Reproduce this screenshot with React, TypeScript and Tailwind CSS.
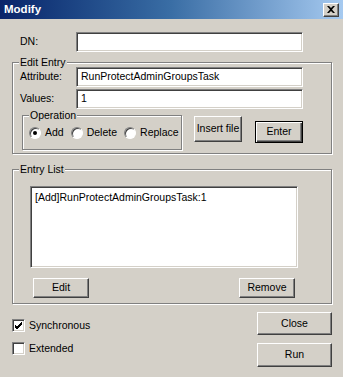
import React from "react";

const font = "font-['Liberation_Sans',Arial,sans-serif]";

const sunken =
  "bg-white border border-t-[#808080] border-l-[#808080] border-b-white border-r-white shadow-[inset_1px_1px_0_#404040,inset_-1px_-1px_0_#d4d0c8]";

const raised =
  "bg-[#d4d0c8] border border-t-white border-l-white border-b-[#404040] border-r-[#404040] shadow-[inset_-1px_-1px_0_#808080] flex items-center justify-center text-[10.5px] text-black";

const etched = "border border-[#808080] shadow-[inset_1px_1px_0_#fff,1px_1px_0_#fff]";

const Legend = ({ children }: { children: React.ReactNode }) => (
  <div className="-mt-[7px] -mb-[2px] ml-[6px] w-fit bg-[#d4d0c8] px-[1px] text-[10.5px] leading-[13px] text-black">
    {children}
  </div>
);

const TextBox = ({ value, className }: { value?: string; className: string }) => (
  <div className={`${sunken} ${className} flex items-center pl-[4px] text-[10.5px] text-black`}>{value}</div>
);

const Radio = ({ checked, label, className }: { checked?: boolean; label: string; className?: string }) => (
  <div className={`flex items-center ${className ?? ""}`}>
    <div className="w-[12px] h-[12px] rounded-full bg-white border border-t-[#808080] border-l-[#808080] border-b-white border-r-white shadow-[inset_1px_1px_0_#404040] flex items-center justify-center">
      {checked && <div className="w-[4px] h-[4px] rounded-full bg-black" />}
    </div>
    <span className="ml-[4px] text-[10.5px] text-black">{label}</span>
  </div>
);

const CheckBox = ({ checked, label }: { checked?: boolean; label: string }) => (
  <div className="flex items-center h-[13px]">
    <div className={`${sunken} w-[13px] h-[13px] flex items-center justify-center`}>
      {checked && (
        <svg width="9" height="9" viewBox="0 0 9 9">
          <path d="M1 4 L3 6 L8 1 M1 5 L3 7 L8 2 M1 6 L3 8 L8 3" stroke="#000" strokeWidth="1" fill="none" />
        </svg>
      )}
    </div>
    <span className="ml-[4px] text-[10.5px] text-black">{label}</span>
  </div>
);

export default function App() {
  return (
    <div className={`w-[343px] h-[377px] bg-[#d4d0c8] flex flex-col overflow-hidden ${font}`}>
      {/* Title bar */}
      <div className="h-[19px] flex items-center bg-gradient-to-r from-[#0a246a] via-[#3a6ea5] to-[#a6caf0] pl-[4px] pr-[4px]">
        <span className="text-white font-bold text-[11.5px]">Modify</span>
        <div className={`${raised} ml-auto w-[16px] h-[14px]`}>
          <svg width="8" height="7" viewBox="0 0 8 7">
            <path d="M0 0 L2 0 L4 2 L6 0 L8 0 L5 3.5 L8 7 L6 7 L4 5 L2 7 L0 7 L3 3.5 Z" fill="#000" />
          </svg>
        </div>
      </div>

      <div className="flex flex-col pl-[12px] pr-[11px]">
        {/* DN */}
        <div className="flex items-center mt-[13px]">
          <span className="w-[64px] pl-[8px] text-[10.5px] text-black">DN:</span>
          <TextBox className="w-[227px] h-[20px]" />
        </div>

        {/* Edit Entry */}
        <div className={`${etched} mt-[10px] w-[320px] h-[92px] flex flex-col`}>
          <Legend>Edit Entry</Legend>
          <div className="flex items-center">
            <span className="w-[63px] pl-[7px] text-[10.5px] text-black">Attribute:</span>
            <TextBox value="RunProtectAdminGroupsTask" className="w-[227px] h-[20px]" />
          </div>
          <div className="flex items-center mt-[2px]">
            <span className="w-[63px] pl-[7px] text-[10.5px] text-black">Values:</span>
            <TextBox value="1" className="w-[227px] h-[20px]" />
          </div>
          <div className="flex items-start mt-[6px]">
            <div className={`${etched} ml-[9px] w-[160px] h-[35px] flex flex-col`}>
              <Legend>Operation</Legend>
              <div className="flex items-center mt-[5px] pl-[6px]">
                <Radio checked label="Add" />
                <Radio label="Delete" className="ml-[7px]" />
                <Radio label="Replace" className="ml-[7px]" />
              </div>
            </div>
            <div className={`${raised} ml-[12px] mt-[1px] w-[48px] h-[26px] whitespace-nowrap`}>Insert file</div>
            <div className="ml-[13px] mt-[6px] w-[48px] h-[22px] border border-black bg-[#d4d0c8] shadow-[inset_1px_1px_0_#fff,inset_-1px_-1px_0_#404040,inset_-2px_-2px_0_#808080] flex items-center justify-center text-[10.5px] text-black">
              Enter
            </div>
          </div>
        </div>

        {/* Entry List */}
        <div className={`${etched} mt-[15px] w-[320px] h-[135px] flex flex-col`}>
          <Legend>Entry List</Legend>
          <div className={`${sunken} ml-[17px] mt-[12px] w-[268px] h-[82px] pl-[4px] pt-[3px] text-[10.5px] leading-[14px] text-black`}>
            [Add]RunProtectAdminGroupsTask:1
          </div>
          <div className="flex justify-between mt-[10px] pl-[20px] pr-[36px]">
            <div className={`${raised} w-[56px] h-[20px]`}>Edit</div>
            <div className={`${raised} w-[56px] h-[20px]`}>Remove</div>
          </div>
        </div>

        {/* Bottom */}
        <div className="flex mt-[8px]">
          <div className="flex flex-col gap-[10px] pt-[7px]">
            <CheckBox checked label="Synchronous" />
            <CheckBox label="Extended" />
          </div>
          <div className="ml-auto flex flex-col gap-[8px]">
            <div className={`${raised} w-[75px] h-[23px]`}>Close</div>
            <div className={`${raised} w-[75px] h-[24px]`}>Run</div>
          </div>
        </div>
      </div>
    </div>
  );
}
